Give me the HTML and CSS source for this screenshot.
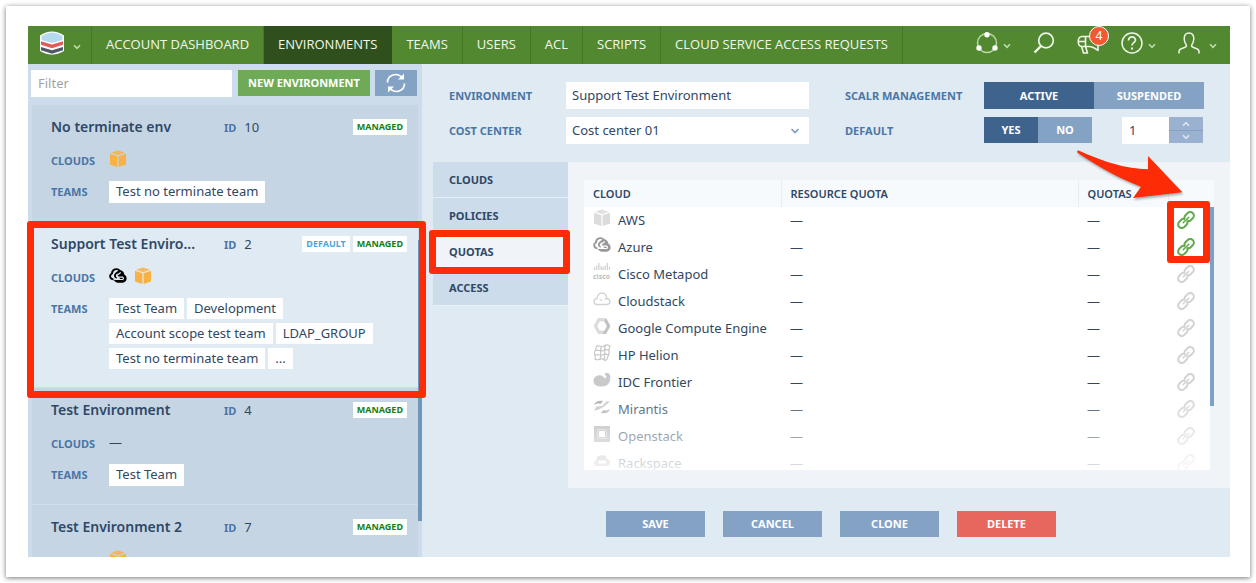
FILE: index.html
```html
<!DOCTYPE html>
<html lang="en">
<head>
<meta charset="utf-8">
<title>Environments</title>
<link rel="stylesheet" href="styles.css">
</head>
<body>
<svg class="defs" aria-hidden="true">
  <symbol id="chevron" viewBox="0 0 8 6"><path d="M1 1.2 4 4.4 7 1.2" fill="none" stroke="currentColor" stroke-width="1.6"/></symbol>
  <symbol id="aws" viewBox="0 0 18 18">
    <path d="M9 .6 16 2.800 9 5.200 2 2.800Z" opacity=".85"/>
    <path d="M1 3.800 8.400 6.200V17L1 14.500Z"/><path d="M17 3.800 9.600 6.200V17L17 14.500Z"/>
  </symbol>
  <symbol id="azure" viewBox="0 0 18 18">
    <path d="M9.500 3.200C13 2.500 15 5 15.300 7.500c2.800 1.500 3 5.200 1 7-1 1-2 1.300-3.500 1.300H8.500C6.500 15.600 5 14 5 12.300h6.500L8 8.500Z" fill="currentColor"/>
    <path d="M4 12.300C.6 11.500.2 7.700 3 6.500 3 2.500 8 .5 10.800 3.800M4 12.300h1.500M10.800 3.800 7.300 6.300C5 8 5.800 10.500 8 10.500" fill="none" stroke="currentColor" stroke-width="1.900"/>
    <path d="M11.700 5.500 8.200 8.200c-1.200 1.100-.5 2 .6 2h4.500c1.500.2 1.500 2.300-.2 2.300H7c-1 0-2-.3-2.700-1" fill="none" stroke="var(--hole, #fff)" stroke-width="1.200"/>
  </symbol>
  <symbol id="link" viewBox="0 0 18 18">
    <g fill="none" stroke="currentColor" stroke-width="2" stroke-linecap="round">
      <path d="M7.600 7.200C7.300 6 7.700 5 8.500 4.200L10.700 2C12.300.6 14.300.7 15.700 2s1.600 3.500.2 5L13.700 9.200C12.900 10 11.700 10.300 10.700 10"/>
      <path d="M10.400 10.800C10.700 12 10.300 13 9.500 13.800L7.300 16C5.700 17.400 3.700 17.300 2.300 16S.7 12.500 2.100 11L4.300 8.800C5.100 8 6.300 7.700 7.300 8"/>
      <path d="M6.200 11.800 11.800 6.200" stroke-width="1.500"/>
    </g>
  </symbol>
</svg>

<div class="frame">
<div class="app">
  <header class="nav">
    <button class="nav-logo" aria-label="Scalr menu">
      <svg width="26" height="24" viewBox="0 0 26 24">
        <path d="M1 4.500C5 1.800 9 .8 13 .5 17 .8 21 1.800 25 4.500V20C21 22.500 17 23.400 13 23.700 9 23.400 5 22.500 1 20Z" fill="#fff"/>
        <path d="M2.500 5C6 3 10 1.800 13 1.500 16 1.800 20 3 23.500 5v4L13 12 2.500 9Z" fill="#b5d9ee"/>
        <path d="M2 10.200 13 13.600 24 10.200v3.600L13 17.200 2 13.800Z" fill="#e25b5b"/>
        <path d="M2 16 13 19.300 24 16v3.300L13 22.700 2 19.300Z" fill="#4e5866"/>
      </svg>
      <svg class="chev" width="8" height="6"><use href="#chevron"/></svg>
    </button>
    <nav class="nav-links">
      <a href="#">ACCOUNT DASHBOARD</a>
      <a href="#" class="current" aria-current="page">ENVIRONMENTS</a>
      <a href="#">TEAMS</a>
      <a href="#">USERS</a>
      <a href="#">ACL</a>
      <a href="#">SCRIPTS</a>
      <a href="#">CLOUD SERVICE ACCESS REQUESTS</a>
    </nav>
    <div class="nav-tools">
      <button aria-label="Scope">
        <svg width="22" height="22" viewBox="0 0 22 22"><circle cx="11" cy="11" r="9.500" fill="none" stroke="#b9d8a4" stroke-width="1.500"/><g fill="#fff"><circle cx="11" cy="2.800" r="2.700"/><circle cx="3" cy="16" r="2.700"/><circle cx="19" cy="16" r="2.700"/></g></svg>
        <svg class="chev" width="8" height="6"><use href="#chevron"/></svg>
      </button>
      <button aria-label="Search">
        <svg width="22" height="22" viewBox="0 0 22 22" fill="none" stroke="#eef6e8"><circle cx="13" cy="8.500" r="7.300" stroke-width="1.700"/><path d="M8 14 1.500 20.500" stroke-width="2.400"/></svg>
      </button>
      <button class="alerts" aria-label="Announcements">
        <svg width="24" height="22" viewBox="0 0 24 22" fill="none" stroke="#eef6e8" stroke-width="1.600" stroke-linejoin="round"><path d="M5 4.500h8c3-.3 5-1.300 8-3.500v17.500c-3-2.500-5-3.700-8-4H5C0 14.500 0 4.500 5 4.500ZM8.500 4.500v10M4.500 14.500 6.500 21h4l-2-6.500M1.500 9.500h7"/></svg>
        <span class="count">4</span>
      </button>
      <button aria-label="Help">
        <svg width="22" height="22" viewBox="0 0 22 22" fill="none" stroke="#eef6e8"><circle cx="11" cy="11" r="10" stroke-width="1.500"/><path d="M7.500 8.500C7.500 3.500 14.700 4 14.500 8.200 14.300 10.700 11 10.700 11 13.500" stroke-width="1.700"/><path d="M11 15.500v2" stroke-width="2"/></svg>
        <svg class="chev" width="8" height="6"><use href="#chevron"/></svg>
      </button>
      <button class="user" aria-label="User">
        <svg width="22" height="22" viewBox="0 0 22 22" fill="none" stroke="#eef6e8" stroke-width="1.500"><path d="M1 21.500v-2c0-2 1.500-2.700 3.500-3.300C7 15.500 8.500 15 8.500 13.800 8.500 12.500 6.500 11.500 6.200 7 6 3 8 1 11 1s5 2 4.800 6c-.3 4.500-2.300 5.500-2.300 6.800 0 1.200 1.500 1.700 4 2.400 2 .6 3.500 1.300 3.500 3.300v2"/></svg>
        <svg class="chev" width="8" height="6"><use href="#chevron"/></svg>
      </button>
    </div>
  </header>

  <div class="body">
    <aside class="sidebar">
      <div class="toolbar">
        <input class="filter" type="text" placeholder="Filter" aria-label="Filter">
        <button class="new">NEW ENVIRONMENT</button>
        <button class="refresh" aria-label="Refresh">
          <svg width="20" height="20" viewBox="0 0 20 20" fill="none" stroke="#fff" stroke-width="1.700"><path d="M1.500 9.500C1.500 2 11-1.500 16.500 5M18.500 10.500C18.500 18 9 21.500 3.500 15"/><path d="M18 .5v6h-6ZM2 19.500v-6h6Z" fill="#fff" stroke="none"/></svg>
        </button>
      </div>
      <div class="list">
        <article class="card">
          <div class="card-head"><h2>No terminate env</h2><span class="id"><b>ID</b>10</span><span class="badges"><span>MANAGED</span></span></div>
          <div class="card-row clouds"><b>CLOUDS</b><span class="icons"><svg class="orange" width="18" height="18"><use href="#aws"/></svg></span></div>
          <div class="card-row"><b>TEAMS</b><span class="chips"><span>Test no terminate team</span></span></div>
        </article>
        <article class="card selected">
          <div class="card-head"><h2>Support Test Enviro...</h2><span class="id"><b>ID</b>2</span><span class="badges"><span class="default">DEFAULT</span><span>MANAGED</span></span></div>
          <div class="card-row clouds"><b>CLOUDS</b><span class="icons"><svg class="black" width="18" height="18"><use href="#azure"/></svg><svg class="orange" width="18" height="18"><use href="#aws"/></svg></span></div>
          <div class="card-row"><b>TEAMS</b><span class="chips"><span>Test Team</span><span>Development</span><span>Account scope test team</span><span>LDAP_GROUP</span><span>Test no terminate team</span><span>...</span></span></div>
        </article>
        <article class="card">
          <div class="card-head"><h2>Test Environment</h2><span class="id"><b>ID</b>4</span><span class="badges"><span>MANAGED</span></span></div>
          <div class="card-row clouds"><b>CLOUDS</b><span class="icons">—</span></div>
          <div class="card-row"><b>TEAMS</b><span class="chips"><span>Test Team</span></span></div>
        </article>
        <article class="card">
          <div class="card-head"><h2>Test Environment 2</h2><span class="id"><b>ID</b>7</span><span class="badges"><span>MANAGED</span></span></div>
          <div class="card-row clouds"><b></b><span class="icons"><svg class="orange" width="18" height="18"><use href="#aws"/></svg></span></div>
        </article>
      </div>
      <div class="list-thumb"></div>
    </aside>

    <main class="main">
      <form class="settings">
        <label for="env">ENVIRONMENT</label>
        <input id="env" class="field" type="text" value="Support Test Environment">
        <span class="label" id="lbl-m">SCALR MANAGEMENT</span>
        <div class="segment wide" role="group" aria-labelledby="lbl-m"><button type="button" class="on">ACTIVE</button><button type="button">SUSPENDED</button></div>
        <label for="cost">COST CENTER</label>
        <div class="select"><select id="cost" class="field"><option>Cost center 01</option></select><svg width="10" height="8" viewBox="0 0 10 8"><path d="M1.500 2 5 5.500 8.500 2" fill="none" stroke="#7ba0c4" stroke-width="1.700"/></svg></div>
        <span class="label" id="lbl-d">DEFAULT</span>
        <div class="pair">
          <div class="segment" role="group" aria-labelledby="lbl-d"><button type="button" class="on">YES</button><button type="button">NO</button></div>
          <div class="spinner">
            <input type="text" value="1" aria-label="Priority">
            <div class="steps">
              <button type="button" aria-label="Increase"><svg class="up" width="8" height="6"><use href="#chevron"/></svg></button>
              <button type="button" aria-label="Decrease"><svg width="8" height="6"><use href="#chevron"/></svg></button>
            </div>
          </div>
        </div>
      </form>

      <div class="content">
        <div class="tabs" role="tablist">
          <button role="tab">CLOUDS</button>
          <button role="tab">POLICIES</button>
          <button role="tab" aria-selected="true" class="active">QUOTAS</button>
          <button role="tab">ACCESS</button>
        </div>
        <section class="panel">
          <div class="grid">
            <table>
              <colgroup><col class="c-cloud"><col><col class="c-quota"><col class="c-link"><col class="c-scroll"></colgroup>
              <thead><tr><th>CLOUD</th><th>RESOURCE QUOTA</th><th>QUOTAS</th><th></th><th class="gutter"></th></tr></thead>
              <tbody>
                <tr><td><span class="cloud"><svg class="light" width="18" height="18"><use href="#aws"/></svg>AWS</span></td><td>—</td><td>—</td><td><a href="#" class="link on" aria-label="Edit AWS quota"><svg width="18" height="18"><use href="#link"/></svg></a></td></tr>
                <tr><td><span class="cloud"><svg class="grey" width="18" height="18"><use href="#azure"/></svg>Azure</span></td><td>—</td><td>—</td><td><a href="#" class="link on" aria-label="Edit Azure quota"><svg width="18" height="18"><use href="#link"/></svg></a></td></tr>
                <tr><td><span class="cloud"><svg width="18" height="18" viewBox="0 0 18 18"><path d="M1.500 4v3M3.700 2.500v4.500M5.900 0v7M8.100 3v4M10 4v3M12.100 2.500v4.500M14.300 0v7M16.500 4v3" stroke="#cfcfcf" stroke-width="1.200"/><text x="0" y="16" font-size="7" font-weight="700" fill="#bdbdbd">cisco</text></svg>Cisco Metapod</span></td><td>—</td><td>—</td><td><a href="#" class="link" aria-label="Edit Cisco quota"><svg width="18" height="18"><use href="#link"/></svg></a></td></tr>
                <tr><td><span class="cloud"><svg width="18" height="18" viewBox="0 0 18 18"><path d="M4 14.500C0 14.200 0 8.500 4 8.500 4.500 5 5.500 3 9 3s4.500 2.500 5 5.500c4 .5 4 5.800 0 6ZM6.500 9C8 9.500 8.500 10 8.500 11M14 8.500c-1 0-1.700.3-2 1" fill="none" stroke="#d3d3d3" stroke-width="1.300"/></svg>Cloudstack</span></td><td>—</td><td>—</td><td><a href="#" class="link" aria-label="Edit Cloudstack quota"><svg width="18" height="18"><use href="#link"/></svg></a></td></tr>
                <tr><td><span class="cloud"><svg width="18" height="18" viewBox="0 0 18 18"><path d="M5 1h8l4.300 8L13 17H5L.7 9Z" fill="#dcdcdc"/><path d="M13 1 17.300 9 13 17H9l4-5 1-3-3-4Z" fill="#c2c2c2"/><path d="M6.700 4.500h4.600L13.700 9 11.300 13.500H6.700L4.300 9Z" fill="#fff"/></svg>Google Compute Engine</span></td><td>—</td><td>—</td><td><a href="#" class="link" aria-label="Edit Google quota"><svg width="18" height="18"><use href="#link"/></svg></a></td></tr>
                <tr><td><span class="cloud"><svg width="18" height="18" viewBox="0 0 18 18" fill="none" stroke="#c6c6c6" stroke-width="1.200"><path d="M4 2c3-1 4 2 7 0s4-1 6 .5C15 6 17 8 15.500 11s-.5 4-3 5.500c-2-.5-2.500-2.500-5-1.500S4 16.500 2 15C3.500 12 0 10 2 7s0-3 2-5ZM2.500 6.500c3-1.500 5 1.500 8 0s4-1 5.500-.2M2 11c3-1.500 5 1.500 7.500 0s4-1 6-.2M8.500 2.500C6 6 9.500 9 7 15M12.500 1.500C10 6 13.500 9 11 15.500"/></svg>HP Helion</span></td><td>—</td><td>—</td><td><a href="#" class="link" aria-label="Edit HP quota"><svg width="18" height="18"><use href="#link"/></svg></a></td></tr>
                <tr><td><span class="cloud"><svg width="18" height="18" viewBox="0 0 18 18"><path d="M.5 10C.5 5 7 2.500 10.500 6c1 1.200 1.500 1.500 2.500 1 1-.7-.2-2-1-3.500C11 1.500 16.500.5 17.200 5 18 11 15 15.500 9 15.500 4 15.500.5 14 .5 10Z" fill="#c9c9c9"/></svg>IDC Frontier</span></td><td>—</td><td>—</td><td><a href="#" class="link" aria-label="Edit IDC quota"><svg width="18" height="18"><use href="#link"/></svg></a></td></tr>
                <tr><td><span class="cloud"><svg width="18" height="18" viewBox="0 0 18 18"><path d="M1 7C2 4 5 2 10 3L7.500 6C5.500 5 3 5.500 1 7Z" fill="#aaa"/><path d="M17 11c-1 3-4 5-9 4l2.500-3C12.500 13 15 12.500 17 11Z" fill="#aaa"/><path d="M17 3.500H13.500L9 8 3.500 8.500 1 12.500l5-1L11 8.500Z" fill="#c4c4c4"/></svg>Mirantis</span></td><td>—</td><td>—</td><td><a href="#" class="link" aria-label="Edit Mirantis quota"><svg width="18" height="18"><use href="#link"/></svg></a></td></tr>
                <tr><td><span class="cloud"><svg width="18" height="18" viewBox="0 0 18 18"><path d="M1 1h16v16H1ZM6 6v6h6V6Z" fill="#b0b0b0" fill-rule="evenodd"/><path d="M4.500 4.500h9v9h-9Z" fill="none" stroke="#d0d0d0"/></svg>Openstack</span></td><td>—</td><td>—</td><td><a href="#" class="link" aria-label="Edit Openstack quota"><svg width="18" height="18"><use href="#link"/></svg></a></td></tr>
                <tr><td><span class="cloud"><svg width="18" height="18" viewBox="0 0 18 18"><path d="M3 14C0 13 .5 8.500 3.500 8.500 3 4.500 6 3 8.500 3.500 11 2.500 14 4 14 7c4 .5 4 6 1 7ZM5 11.500h8V8.500H6Z" fill="#b0b0b0" fill-rule="evenodd"/></svg>Rackspace</span></td><td>—</td><td>—</td><td><a href="#" class="link" aria-label="Edit Rackspace quota"><svg width="18" height="18"><use href="#link"/></svg></a></td></tr>
              </tbody>
            </table>
            <div class="grid-thumb"></div>
            <div class="mark link-mark"></div>
          </div>
          <svg class="arrow" width="112" height="58" viewBox="0 0 112 58"><path d="M3 2.800C28 14 50 21 72 21.300V8L106.300 44.300 57 50l8-11.300C44 31 22 18.500 1.500 4.800.8 3.500 1.500 2 3 2.800Z" fill="#fd2c06"/></svg>
        </section>
      </div>

      <footer class="actions">
        <button>SAVE</button><button>CANCEL</button><button>CLONE</button><button class="danger">DELETE</button>
      </footer>
    </main>
  </div>
</div>
</div>
</body>
</html>
```
FILE: styles.css
```css
* { box-sizing: border-box; }
body { margin: 0; background: #fff; font: 13px/20px "Noto Sans", "Open Sans", sans-serif; color: #32475f; }
button, input, select { font: inherit; color: inherit; border: 0; border-radius: 0; margin: 0; padding: 0; outline: 0; }
button { cursor: pointer; background: none; font-size: 11px; font-weight: 700; }
svg { display: block; flex: none; }
.defs { position: absolute; width: 0; height: 0; }

.frame { min-height: 571px; height: calc(100vh - 12px); margin: 6px; padding: 20px 20px 20px 22px; background: #fff; box-shadow: 0 1px 5px rgba(0, 0, 0, .55); }
.app { height: 100%; display: flex; flex-direction: column; }

/* top navigation */
.nav { display: flex; height: 38px; background: #518830; color: #f2f8ee; }
.nav-logo { display: flex; align-items: center; gap: 8px; width: 64px; padding: 0 0 5px 11px; border-right: 1px solid #457826; }
.nav-logo .chev { margin-top: 8px; }
.chev { color: #bfdcae; }
.nav-links { display: flex; }
.nav-links a { display: flex; align-items: center; padding: 0 14px 3px; border-right: 1px solid #457826; color: inherit; font-family: "Open Sans", sans-serif; font-size: 13px; font-weight: 500; text-decoration: none; white-space: nowrap; }
.nav-links .current { background: #2f501d; border-color: #2f501d; }
.nav-tools { display: flex; align-items: center; gap: 22px; margin-left: auto; padding: 0 13px 4px 0; }
.nav-tools button { position: relative; display: flex; align-items: center; gap: 5px; }
.nav-tools .chev { margin-top: 5px; }
.nav-tools .user { gap: 9px; }
.nav-tools .alerts { width: 22px; }
.count { position: absolute; top: -6px; right: -10px; width: 20px; height: 20px; border: 1px solid #fff; border-radius: 50%; background: #f15a31; color: #fff; font-size: 12px; font-weight: 400; line-height: 18px; text-align: center; }

.body { flex: 1; min-height: 0; display: flex; }

/* environment list */
.sidebar { position: relative; flex: none; width: 394px; display: flex; flex-direction: column; background: #cddceb; }
.toolbar { display: flex; gap: 5px; height: 38px; padding: 6px 5px 0 3px; }
.filter { width: 201px; height: 27px; padding: 0 7px 1px; margin-right: 1px; background: #fff; }
.filter::placeholder { color: #a3a3a3; opacity: 1; }
.new { width: 132px; height: 26px; background: #6fab56; color: #fff; }
.refresh { flex: 1; height: 26px; display: grid; place-items: center; background: #84a3c4; }
/* the list is wider than its cards so that the outline of the selected card is not clipped */
.list { position: relative; z-index: 1; flex: 1; min-height: 0; overflow: hidden; margin: 0 -8px 0 -4px; padding: 3px 12px 0 8px; }
.card { position: relative; min-height: 117px; padding: 12px 11px 18px 19px; border-bottom: 1px solid #cfdeeb; background: #c6d5e4; }
.card.selected { z-index: 1; background: #e0eaf3; }
.card-head { display: flex; align-items: center; height: 20px; }
.card h2 { width: 173px; margin: 0; font-size: 14px; font-weight: 600; line-height: 20px; white-space: nowrap; color: #2e4866; }
.card b { color: #4a76a5; font-size: 11px; }
.id b { margin-right: 8px; }
.badges { display: flex; gap: 3px; margin-left: auto; }
.badges span { padding: 0 4px; background: #fff; color: #168016; font-size: 9px; font-weight: 700; line-height: 16px; }
.badges .default { color: #4ea6d8; }
.card-row { display: flex; }
.card-row > b { flex: none; width: 58px; line-height: 22px; }
.clouds { height: 20px; margin: 13px 0 11px; }
.clouds .icons { display: flex; gap: 7px; line-height: 18px; }
.chips { display: flex; flex-wrap: wrap; gap: 4px 3px; }
.chips span { padding: 0 7px; background: #fff; line-height: 21px; }
.orange { fill: #f8b143; }
.light { fill: #dcdcdc; }
.black { color: #000; --hole: #e0eaf3; }
.grey { color: #999; }
.list-thumb { position: absolute; right: 0; top: 176px; bottom: 36px; width: 4px; background: #7096bd; }

.mark, .selected::after, .tabs .active::after { content: ""; position: absolute; z-index: 2; border: 7px solid #fd2c06; border-radius: 3px; pointer-events: none; }
.selected::after { inset: -1px -8px -11px -5px; }

/* settings form */
.main { flex: 1; min-width: 0; display: flex; flex-direction: column; background: #e0eaf3; }
.settings { display: grid; grid-template-columns: 117px minmax(160px, 1fr) 175px 220px; row-gap: 8px; align-items: center; padding: 18px 26px 18px 27px; }
.settings label, .label { color: #4a76a5; font-size: 11px; font-weight: 700; line-height: 27px; }
.label { padding-left: 36px; }
.field { width: 100%; height: 27px; padding: 0 6px 1px; background: #fff; }
.select { position: relative; }
.select select { appearance: none; display: block; }
.select svg { position: absolute; right: 9px; top: 10px; pointer-events: none; }
.segment { display: flex; width: 108px; height: 26px; }
.segment.wide { width: 220px; height: 27px; }
.segment button { flex: 1; background: #84a3c4; color: #fff; }
.segment .on { background: #3e648e; }
.pair { display: flex; justify-content: space-between; padding-right: 1px; }
.spinner { display: flex; width: 81px; height: 27px; }
.spinner input { width: 47px; padding: 0 7px 1px; background: #fff; }
.steps { flex: 1; display: grid; height: 26px; grid-template-rows: 1fr 1fr; background: #9ab1d0; color: #dbe6f2; }
.steps button { display: grid; place-items: center; color: inherit; }
.steps button + button { border-top: 1px solid #86a0c3; }
.up { transform: rotate(180deg); }

/* tabs and quota table */
.content { flex: 1; min-height: 0; display: flex; padding-left: 11px; }
.tabs { flex: none; width: 135px; }
.tabs button { position: relative; display: block; width: 100%; height: 36px; padding: 0 16px; border-bottom: 1px solid #e6eef6; background: #cddceb; color: #2e4866; text-align: left; }
.tabs .active { background: #f0f3f8; }
.tabs .active::after { inset: -4px -2px -5px -4px; }
.panel { position: relative; flex: 1; min-width: 0; padding: 18px 16px; background: #f0f3f8; }
.grid { position: relative; height: 100%; overflow: hidden; }
.grid::after { content: ""; position: absolute; inset: auto 4px 0 0; height: 84px; background: linear-gradient(rgba(255, 255, 255, 0), rgba(255, 255, 255, .85)); pointer-events: none; }
table { width: 100%; table-layout: fixed; border-collapse: collapse; }
.c-cloud { width: 197px; }
.c-quota { width: 90px; }
.c-link { width: 42px; }
.c-scroll { width: 4px; }
th { height: 27px; padding: 0 9px; background: #f7fafd; border-left: 1px solid #e6eef5; color: #2e4866; font-size: 11px; font-weight: 600; text-align: left; }
th:first-child { border: 0; }
th.gutter { border: 0; padding: 0; }
td { height: 27px; padding: 0 9px 2px; background: #fff; }
.cloud { display: flex; align-items: center; gap: 7px; white-space: nowrap; }
.cloud svg { margin-bottom: 4px; overflow: visible; }
.link { display: block; color: #d3d3d3; }
.link.on { color: #62ab4c; }
.grid-thumb { position: absolute; right: 0; top: 27px; width: 4px; height: 199px; background: #7ea0c4; }
.link-mark { top: 21px; right: 4px; width: 43px; height: 62px; }
.arrow { position: absolute; top: -14px; right: 42px; z-index: 3; filter: drop-shadow(1px 2px 1px rgba(0, 0, 0, .3)); }

/* form actions */
.actions { display: flex; justify-content: center; gap: 18px; padding: 23px 0 20px 10px; }
.actions button { width: 99px; height: 26px; background: #84a3c4; color: #fff; }
.actions .danger { background: #e7665d; }
```
